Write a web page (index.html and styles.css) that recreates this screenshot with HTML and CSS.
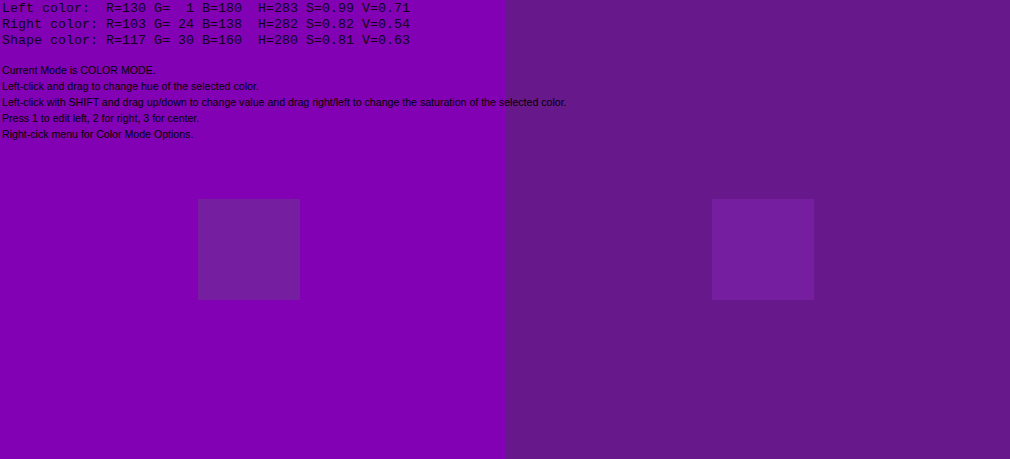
FILE: index.html
```html
<!DOCTYPE html>
<html>
<head>
<meta charset="utf-8">
<link rel="stylesheet" href="styles.css">
</head>
<body>
<div class="stage">
  <div class="panel panel-left">
    <div class="shape"></div>
  </div>
  <div class="panel panel-right">
    <div class="shape"></div>
  </div>
  <div class="overlay">
    <div class="readout">
      <div class="row">Left color:  R=130 G=  1 B=180  H=283 S=0.99 V=0.71</div>
      <div class="row">Right color: R=103 G= 24 B=138  H=282 S=0.82 V=0.54</div>
      <div class="row">Shape color: R=117 G= 30 B=160  H=280 S=0.81 V=0.63</div>
    </div>
    <div class="help">
      <div class="line">Current Mode is COLOR MODE.</div>
      <div class="line">Left-click and drag to change hue of the selected color.</div>
      <div class="line">Left-click with SHIFT and drag up/down to change value and drag right/left to change the saturation of the selected color.</div>
      <div class="line">Press 1 to edit left, 2 for right, 3 for center.</div>
      <div class="line">Right-cick menu for Color Mode Options.</div>
    </div>
  </div>
</div>
</body>
</html>
```

FILE: styles.css
```css
html, body {
  margin: 0;
  padding: 0;
  width: 1010px;
  height: 459px;
  overflow: hidden;
  background: #820bb4;
}
.stage {
  position: relative;
  display: flex;
  width: 1010px;
  height: 459px;
}
.panel {
  box-sizing: border-box;
  height: 459px;
  padding-top: 199px;
}
.panel-left {
  width: 505px;
  background: rgb(130, 1, 180);
  padding-left: 198px;
}
.panel-right {
  width: 505px;
  background: rgb(103, 24, 138);
  padding-left: 207px;
}
.shape {
  width: 102px;
  height: 101px;
  background: rgb(117, 30, 160);
}
.overlay {
  position: absolute;
  left: 0;
  top: 0;
  color: #000;
}
.readout {
  padding-top: 1px;
  padding-left: 2px;
  font-family: "Liberation Mono", "DejaVu Sans Mono", monospace;
  font-size: 13.33px;
  line-height: 16px;
  color: #100018;
}
.row {
  white-space: pre;
}
.help {
  margin-top: 13px;
  padding-left: 2px;
  font-family: "Liberation Sans", Arial, sans-serif;
  font-size: 10.6px;
  line-height: 16px;
}
.line {
  white-space: nowrap;
}
```
